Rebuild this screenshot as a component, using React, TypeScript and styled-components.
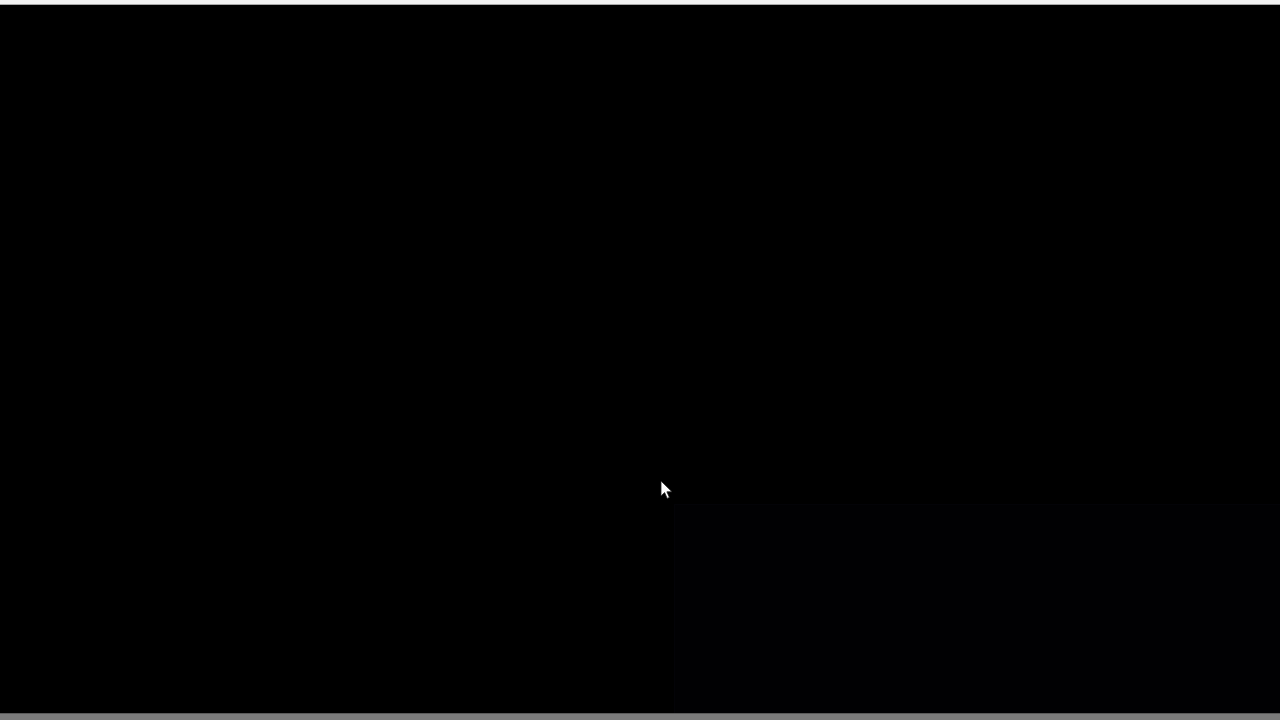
import styled, { createGlobalStyle } from 'styled-components';

// PARAM global
const Global = createGlobalStyle`
  html, body {
    margin: 0;
    padding: 0;
    background: #000;
    font-family: 'Liberation Sans', Arial, sans-serif;
    overflow: hidden;
  }
`;

// COMPONENT cursor arrow
const CursorView = () => {
  return (
    <Screen.Cursor width='14' height='20' viewBox='0 0 14 20'>
      <path d='M1 1 L1 16 L4.6 12.6 L7.2 18.4 L9.4 17.4 L6.9 11.8 L12 11.8 Z' fill='#fff' stroke='#222' strokeWidth='0.8' />
    </Screen.Cursor>
  );
};

// COMPONENT screen
const App = () => {
  return (
    <>
      <Global />
      <Screen.Container>
        <Screen.TopBar />
        <Screen.Main>
          <CursorView />
          <Screen.Panel />
        </Screen.Main>
        <Screen.BottomBar />
      </Screen.Container>
    </>
  );
};

// PARAM style
const Screen = {
  Container: styled.div`
    width: 1280px;
    height: 720px;
    display: flex;
    flex-direction: column;
    background: #000;
  `,
  TopBar: styled.div`
    height: 4px;
    background: #f2f2f2;
    border-bottom: 1px solid #a8a8a8;
  `,
  Main: styled.div`
    position: relative;
    flex: 1;
    display: flex;
    align-items: flex-end;
    justify-content: flex-end;
    background: #000;
  `,
  Panel: styled.div`
    width: 605px;
    height: 208px;
    background: #010103;
    border-top: 1px solid #030307;
    border-left: 1px solid #030307;
  `,
  Cursor: styled.svg`
    position: absolute;
    left: 660px;
    top: 475px;
  `,
  BottomBar: styled.div`
    height: 6px;
    background: #7b7b7b;
    border-top: 1px solid #5a5a5a;
  `,
};

export default App;
